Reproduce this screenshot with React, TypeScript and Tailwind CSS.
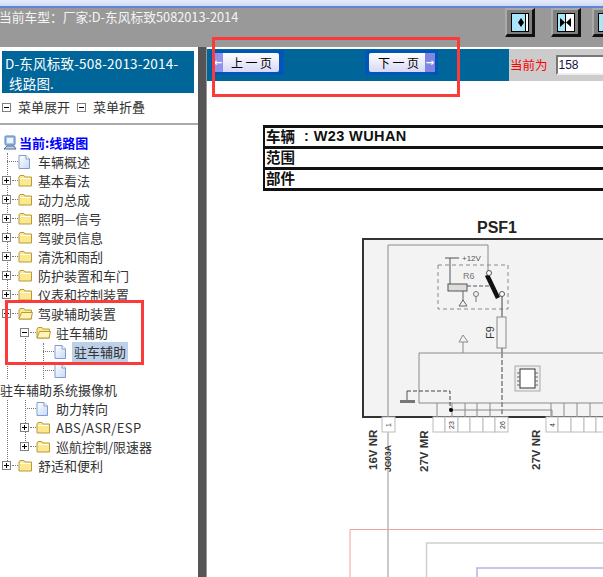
import React from "react";

const cjk = { fontFamily: '"Noto Sans CJK SC", "Liberation Sans", sans-serif' };

function Folder({ open }: { open?: boolean }) {
  return (
    <svg width="15" height="13" viewBox="0 0 15 13" className="shrink-0">
      <path d="M1 3 L2 1.5 H6 L7 3 H13.5 V12 H1 Z" fill="#fbe88f" stroke="#b99b3a" />
      {open ? <path d="M1 12 L3.5 5.5 H14.5 L13 12 Z" fill="#fff3b8" stroke="#b99b3a" /> : <path d="M2 4.5 H12.5" stroke="#fff" />}
    </svg>
  );
}

function Page() {
  return (
    <svg width="12" height="14" viewBox="0 0 12 14" className="shrink-0">
      <defs>
        <linearGradient id="pg" x1="0" y1="0" x2="1" y2="1">
          <stop offset="0" stopColor="#fff" />
          <stop offset="1" stopColor="#c9d8f4" />
        </linearGradient>
      </defs>
      <path d="M1 .5 H8 L11.5 4 V13.5 H1 Z" fill="url(#pg)" stroke="#7f9dd0" />
      <path d="M8 .5 V4 H11.5" fill="#fff" stroke="#7f9dd0" />
    </svg>
  );
}

function Box({ open }: { open?: boolean }) {
  return (
    <span className="relative block w-[9px] h-[9px] border border-[#808080] bg-white shrink-0">
      <span className="absolute left-[1px] top-[3px] w-[5px] h-[1px] bg-black" />
      {!open && <span className="absolute left-[3px] top-[1px] w-[1px] h-[5px] bg-black" />}
    </span>
  );
}

type RowT = { t?: string; lvl: number; kind: "folder" | "open" | "page"; sel?: boolean };

const rows: RowT[] = [
  { t: "车辆概述", lvl: 0, kind: "page" },
  { t: "基本看法", lvl: 0, kind: "folder" },
  { t: "动力总成", lvl: 0, kind: "folder" },
  { t: "照明—信号", lvl: 0, kind: "folder" },
  { t: "驾驶员信息", lvl: 0, kind: "folder" },
  { t: "清洗和雨刮", lvl: 0, kind: "folder" },
  { t: "防护装置和车门", lvl: 0, kind: "folder" },
  { t: "仪表和控制装置", lvl: 0, kind: "folder" },
  { t: "驾驶辅助装置", lvl: 0, kind: "open" },
  { t: "驻车辅助", lvl: 1, kind: "open" },
  { t: "驻车辅助", lvl: 2, kind: "page", sel: true },
  { lvl: 2, kind: "page" },
];

const rows2: RowT[] = [
  { t: "助力转向", lvl: 1, kind: "page" },
  { t: "ABS/ASR/ESP", lvl: 1, kind: "folder" },
  { t: "巡航控制/限速器", lvl: 1, kind: "folder" },
  { t: "舒适和便利", lvl: 0, kind: "folder" },
];

function TreeRow({ r }: { r: RowT }) {
  const ml = r.lvl * 18;
  return (
    <div className="relative flex items-center h-[19px] text-[13px] leading-none text-[#333]">
      <div className="relative h-[19px] shrink-0" style={{ width: ml + 18 }}>
        {r.kind === "page" ? (
          <span className="absolute top-[9px] h-0 border-t border-dotted border-[#777]" style={{ left: ml + 7, width: 11 }} />
        ) : (
          <>
            <span className="absolute top-[9px] h-0 w-[6px] border-t border-dotted border-[#777]" style={{ left: ml + 12 }} />
            <span className="absolute top-[5px]" style={{ left: ml + 2 }}>
              <Box open={r.kind === "open"} />
            </span>
          </>
        )}
      </div>
      <span className={r.kind === "page" ? "w-[12px] mr-[8px]" : "w-[15px] mr-[5px]"}>
        {r.kind === "page" ? <Page /> : <Folder open={r.kind === "open"} />}
      </span>
      {r.t && (
        <span className={r.sel ? "bg-[#bcd0ea] px-[2px] -ml-[2px] h-[20px] flex items-center" : r.t.startsWith("ABS") ? "tracking-[0.4px]" : ""}>{r.t}</span>
      )}
    </div>
  );
}

function NavBtn({ arrows, className }: { arrows: number; className?: string }) {
  return (
    <div className={"w-[30px] h-[29px] bg-[#7f7f7f] border-r-[3px] border-b-[3px] border-[#111] border-t-2 border-l-2 border-t-[#aaa] border-l-[#aaa] flex items-center justify-center " + (className ?? "")}>
      <svg width="18" height="19" viewBox="0 0 18 19">
        <rect x=".5" y=".5" width="17" height="18" fill="#a9e6fb" stroke="#000" />
        {arrows === 1 && (
          <>
            <rect x="15" y="1" width="2" height="17" fill="#fff" />
            <path d="M14.500 1 V18" stroke="#000" />
            <path d="M7 9.500 L10 5 L13 9.500 L10 14 Z" fill="#000" />
          </>
        )}
        {arrows === 2 && (
          <>
            <rect x="9" y="1" width="8" height="17" fill="#fff" />
            <path d="M8.500 1 V18" stroke="#000" />
            <path d="M3 5 L8 9.500 L3 14 Z M14 5 L9 9.500 L14 14 Z" fill="#000" />
          </>
        )}
      </svg>
    </div>
  );
}

function Diagram() {
  const pinsA = [433, 445, 458, 470, 483, 495, 508];
  const pinsB = [546, 558, 571, 584, 596];
  const g = "#8a8a8a";
  return (
    <svg width="340" height="386" viewBox="263 191 340 386" className="block ml-[56px]">
      <text x="497" y="233" textAnchor="middle" fontSize="16" fontWeight="700" fill="#222" fontFamily="Liberation Sans">PSF1</text>
      <rect x="363" y="239" width="260" height="178" fill="#f3f3f3" stroke="#333" strokeWidth="2" />
      <path d="M388 417 V245 H488 V272" fill="none" stroke={g} />
      <rect x="438" y="265" width="70" height="44" fill="none" stroke={g} strokeDasharray="4 3" />
      <path d="M445 258 H459 M450 258 V284" fill="none" stroke="#555" />
      <text x="462" y="261" fontSize="8" fill="#555" fontFamily="Liberation Sans">+12V</text>
      <text x="463" y="279" fontSize="9" fill="#777" fontFamily="Liberation Sans">R6</text>
      <rect x="448" y="284" width="19" height="7" fill="#ddd" stroke="#555" />
      <path d="M467 286 H490" stroke="#555" strokeDasharray="4 2" />
      <path d="M463 291 V301 M459 306 L463 300 L467 306 Z" fill="none" stroke="#666" />
      <circle cx="476" cy="294" r="2.500" fill="none" stroke="#777" />
      <path d="M476 296 V302" stroke="#777" />
      <path d="M487 275 L498 298" stroke="#111" strokeWidth="4.500" />
      <circle cx="489" cy="273" r="2.500" fill="#fff" stroke="#555" />
      <circle cx="502" cy="294" r="2.500" fill="#fff" stroke="#555" />
      <path d="M502 297 V353" stroke="#444" />
      <path d="M502 353 V417" stroke="#444" strokeDasharray="5 2" />
      <rect x="497" y="317" width="9" height="31" fill="#f3f3f3" stroke={g} />
      <text transform="translate(494 339) rotate(-90)" fontSize="11" fill="#333" fontFamily="Liberation Sans">F9</text>
      <path d="M463 353 V342 M459 342 L463 335 L468 342 Z" fill="none" stroke={g} />
      <path d="M603 353 H419 V403 H603" fill="none" stroke={g} />
      <rect x="515" y="366" width="25" height="25" fill="#eee" stroke="#aaa" />
      <rect x="520" y="369" width="15" height="19" fill="#fff" stroke="#333" />
      <path d="M517 373 H520 M517 377 H520 M517 381 H520 M517 385 H520 M535 373 H538 M535 377 H538 M535 381 H538 M535 385 H538" stroke="#666" />
      <path d="M407 401 V391" stroke="#555" />
      <path d="M407 391 H450 V409" fill="none" stroke="#444" strokeDasharray="4 2" />
      <rect x="400" y="400" width="15" height="3" fill="#777" />
      <path d="M437 403 V417 M452 403 V417 M465 403 V417 M477 403 V417 M490 403 V417 M551 403 V417 M564 403 V417 M577 403 V417 M590 403 V417" stroke={g} />
      <path d="M451 410 H552 V417" fill="none" stroke={g} />
      <circle cx="451" cy="410" r="2" fill="#000" />
      <rect x="382" y="417" width="13" height="15" fill="#fff" stroke="#bbb" />
      <text transform="translate(391 427) rotate(-90)" fontSize="7" fill="#333" fontFamily="Liberation Sans">1</text>
      {pinsA.slice(0, -1).map((x, i) => (
        <rect key={x} x={x} y="417" width={pinsA[i + 1] - x} height="15" fill="#fff" stroke="#bbb" />
      ))}
      {pinsB.slice(0, -1).map((x, i) => (
        <rect key={x} x={x} y="417" width={pinsB[i + 1] - x} height="15" fill="#fff" stroke="#bbb" />
      ))}
      <rect x="596" y="417" width="12" height="15" fill="#fff" stroke="#bbb" />
      <text transform="translate(454 429) rotate(-90)" fontSize="7" fill="#333" fontFamily="Liberation Sans">23</text>
      <text transform="translate(505 429) rotate(-90)" fontSize="7" fill="#333" fontFamily="Liberation Sans">26</text>
      <text transform="translate(555 427) rotate(-90)" fontSize="7" fill="#333" fontFamily="Liberation Sans">4</text>
      <path d="M388 432 V577" stroke="#c9c9c9" strokeWidth="2" />
      <g fontFamily="Liberation Sans" fontWeight="700" fill="#333">
        <text transform="translate(377 470) rotate(-90)" fontSize="11.500">16V NR</text>
        <text transform="translate(391 472) rotate(-90)" fontSize="8.500">JG03A</text>
        <text transform="translate(428 472) rotate(-90)" fontSize="11.500">27V MR</text>
        <text transform="translate(540 470) rotate(-90)" fontSize="11.500">27V NR</text>
      </g>
      <path d="M350 577 V529.500 H603" fill="none" stroke="#eda39b" />
      <path d="M426.500 577 V543 H603" fill="none" stroke="#cfcfcf" strokeWidth="1.500" />
      <path d="M477 577 V568 H603" fill="none" stroke="#b4b4e6" strokeWidth="1.500" />
    </svg>
  );
}

function PageBtn({ label, dir }: { label: string; dir: "l" | "r" }) {
  const arrow = (
    <span className={(dir === "l" ? "bg-[#8f94ea]" : "bg-[#7f85e0]") + " w-[10px] h-full text-white text-[10px] flex items-center justify-center font-bold"} style={{ fontFamily: "DejaVu Sans" }}>
      {dir === "l" ? "←" : "→"}
    </span>
  );
  return (
    <div className={(dir === "l" ? "pl-[2px] pr-[5px]" : "pl-[4px] pr-[3px]") + " h-[25px] py-[3px] bg-[#0055b8]"}>
      <div className="flex items-center h-[19px] w-[66px] rounded-[2px] bg-gradient-to-b from-[#ffffff] to-[#d8d8f6] text-[12px] leading-none text-black overflow-hidden">
        {dir === "l" && arrow}
        <span className={(dir === "l" ? "pl-[8px]" : "pl-[9px]") + " flex-1 tracking-[2.500px] whitespace-nowrap"}>{label}</span>
        {dir === "r" && arrow}
      </div>
    </div>
  );
}

export default function App() {
  return (
    <div className="relative w-[603px] h-[577px] overflow-hidden bg-white" style={cjk}>
      <div className="h-[8px] bg-gradient-to-b from-[#e6ecfb] to-[#cfdaf5] border-b-2 border-[#5f84d6]" />
      <div className="h-[39px] bg-[#999999] flex justify-between overflow-hidden">
        <div className="text-[12.750px] leading-[17px] -ml-[1px] text-[#f4f4f4] whitespace-nowrap">当前车型：厂家:D-东风标致5082013-2014</div>
        <div className="flex pt-[0px] -mr-[19px] shrink-0">
          <NavBtn arrows={1} />
          <NavBtn arrows={2} className="ml-[16px]" />
          <NavBtn arrows={1} className="ml-[11px]" />
        </div>
      </div>
      <div className="flex h-[530px]">
        <div className="w-[198px] shrink-0 overflow-hidden">
          <div className="mx-[2px] mt-[4px] w-[192px] h-[42px] bg-[#006699] text-white text-[13.500px] leading-[20px] pt-[2px] pl-[3px] tracking-[0.2px]">
            <div className="whitespace-nowrap">D-东风标致-508-2013-2014-</div>
            <div className="pl-[4px]">线路图.</div>
          </div>
          <div className="flex items-center h-[32px] pl-[2px] pb-[2px] text-[13px] text-[#333] border-b-2 border-[#aaaaaa] -mb-px">
            <Box open />
            <span className="ml-[7px]">菜单展开</span>
            <span className="ml-[7px]"><Box open /></span>
            <span className="ml-[7px]">菜单折叠</span>
          </div>
          <div className="relative pt-[9px]">
            <span className="absolute left-[7px] top-[29px] h-[314px] border-l border-dotted border-[#777]" />
            <span className="absolute left-[25px] top-[209px] h-[118px] border-l border-dotted border-[#777]" />
            <span className="absolute left-[43px] top-[219px] h-[38px] border-l border-dotted border-[#777]" />
            <div className="flex items-center h-[19px] pl-[3px] text-[13px] leading-none font-bold text-[#0000ff]">
              <svg width="14" height="16" viewBox="0 0 14 16" className="mr-[2px] shrink-0">
                <rect x="2" y="1" width="10" height="9" rx="1" fill="#9fc4ee" stroke="#5a7fb0" />
                <rect x="4" y="3" width="6" height="5" fill="#eef5ff" />
                <path d="M1 14 L4 11 H11 L13 14 Z" fill="#c7d2e2" stroke="#4a6a9a" />
              </svg>
              当前:线路图
            </div>
            <div className="relative">
              {rows.map((r, i) => <TreeRow key={i} r={r} />)}
              <div className="relative flex items-center h-[19px] bg-white text-[13px] leading-none text-[#333] whitespace-nowrap w-[118px]">驻车辅助系统摄像机</div>
              {rows2.map((r, i) => <TreeRow key={i} r={r} />)}
            </div>
          </div>
        </div>
        <div className="w-[9px] shrink-0 bg-[#555555] border-r border-[#999]" />
        <div className="flex-1 min-w-0 overflow-hidden">
          <div className="flex h-[32px] mt-[2px]">
            <div className="w-[302px] bg-[#006699] flex pl-[4px] pt-[1px] shrink-0">
              <PageBtn label="上一页" dir="l" />
              <div className="ml-[81px]"><PageBtn label="下一页" dir="r" /></div>
            </div>
            <div className="flex-1 bg-[#cccccc] flex items-center pl-[1px] gap-[8px] text-[12.500px] text-[#ff0000] whitespace-nowrap">
              当前为
              <input readOnly value="158" className="w-[60px] h-[20px] shrink-0 bg-white border-2 border-t-[#777] border-l-[#777] border-r-[#eee] border-b-[#eee] text-[12px] text-[#111144] pl-[1px] outline-none" style={{ fontFamily: "Liberation Sans" }} />
            </div>
          </div>
          <div className="pl-[56px] pt-[44px]">
            <div className="w-[400px] border-t-[3px] border-l-[2px] border-[#111] text-[14.500px] font-bold text-[#111] leading-none">
              <div className="h-[21px] flex items-center pl-[1px] pb-[2px] border-b-[3px] border-[#111]">
                <span>车辆</span><span className="ml-[9px] tracking-[0.4px]" style={{ fontFamily: "Liberation Sans" }}>: W23 WUHAN</span>
              </div>
              <div className="h-[21px] flex items-center pl-[1px] pb-[2px] border-b-[3px] border-[#111]">范围</div>
              <div className="h-[21px] flex items-center pl-[1px] pb-[2px] border-b-[3px] border-[#111]">部件</div>
            </div>
          </div>
          <Diagram />
        </div>
      </div>
      <div className="absolute left-[212px] top-[37px] w-[248px] h-[60px] border-[3px] border-[#fb3a3a]" />
      <div className="absolute left-[5px] top-[300px] w-[139px] h-[65px] border-[3px] border-[#fb3a3a]" />
    </div>
  );
}
